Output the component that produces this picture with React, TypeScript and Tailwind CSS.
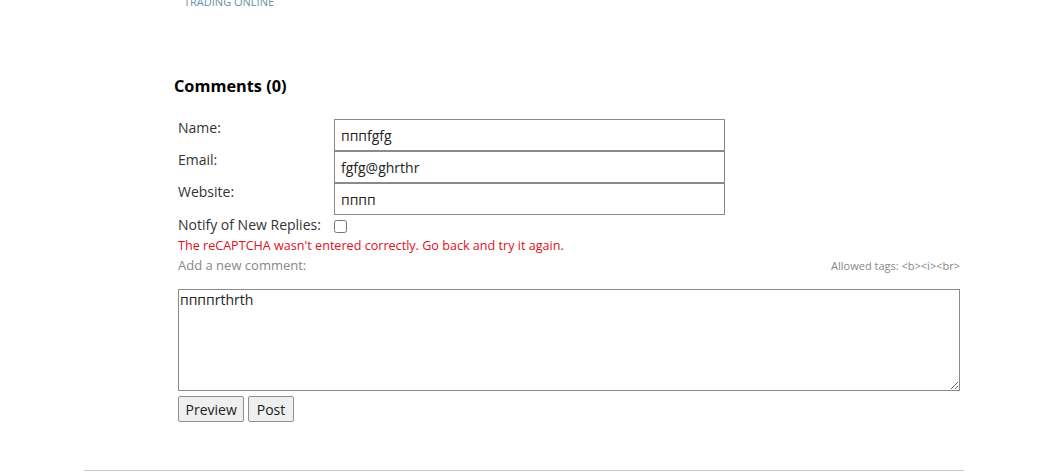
export default function App() {
  return (
    <div className="w-[1061px] h-[475px] bg-white overflow-hidden font-['Open_Sans',sans-serif] text-[#222] relative">
      {/* site header tail */}
      <div className="pl-[184px] -mt-[5px] text-[11px] leading-[14px] text-[#6a8fa8] uppercase">Trading online</div>

      <div className="pl-[174px] pt-[66px]">
        <h3 className="text-[16.3px] leading-[22px] font-bold text-black">Comments (0)</h3>

        <div className="pl-[4px] pt-[22px] w-[786px]">
          <table className="border-collapse text-[14px] text-[#333]">
            <tbody>
              <tr>
                <td className="w-[156px] align-top pt-0 leading-[17px]">Name:</td>
                <td className="p-0">
                  <input
                    defaultValue="пппfgfg"
                    className="w-[391px] h-[32px] border border-[#8a8a8a] px-[6px] text-[14px] text-[#222] outline-none"
                  />
                </td>
              </tr>
              <tr>
                <td className="align-top pt-0 leading-[17px]">Email:</td>
                <td className="p-0">
                  <input
                    defaultValue="fgfg@ghrthr"
                    className="w-[391px] h-[32px] border border-[#8a8a8a] px-[6px] text-[14px] text-[#222] outline-none"
                  />
                </td>
              </tr>
              <tr>
                <td className="align-top pt-0 leading-[17px]">Website:</td>
                <td className="p-0">
                  <input
                    defaultValue="пппп"
                    className="w-[391px] h-[32px] border border-[#8a8a8a] px-[6px] text-[14px] text-[#222] outline-none"
                  />
                </td>
              </tr>
              <tr>
                <td className="leading-[18px] pt-[1px]">Notify of New Replies:</td>
                <td className="p-0 leading-[18px] pt-[1px]">
                  <input type="checkbox" className="w-[13px] h-[13px] align-middle m-0" />
                </td>
              </tr>
            </tbody>
          </table>

          <div className="text-[12.6px] leading-[20px] text-[#e0101c] mt-[2px]">
            The reCAPTCHA wasn't entered correctly. Go back and try it again.
          </div>
          <div className="flex items-end justify-between text-[13px] leading-[19px] text-[#888]">
            <span>Add a new comment:</span>
            <span className="text-[11px]">Allowed tags: &lt;b&gt;&lt;i&gt;&lt;br&gt;</span>
          </div>

          <textarea
            defaultValue="ппппrthrth"
            className="mt-[14px] block w-[782px] h-[102px] border border-[#8a8a8a] px-[1px] py-0 text-[14px] leading-[19px] text-[#222] outline-none"
          />

          <div className="flex gap-[4px] mt-[5px]">
            <button className="h-[26px] px-[6.5px] border border-[#8f8f8f] rounded-[2px] bg-[#efefef] text-[14px] text-[#222]">Preview</button>
            <button className="h-[26px] px-[7.5px] border border-[#8f8f8f] rounded-[2px] bg-[#efefef] text-[14px] text-[#222]">Post</button>
          </div>
        </div>
      </div>

      <div className="mx-[84px] w-[880px] mt-[48px] border-t border-[#c8c8c8]" />
    </div>
  )
}
